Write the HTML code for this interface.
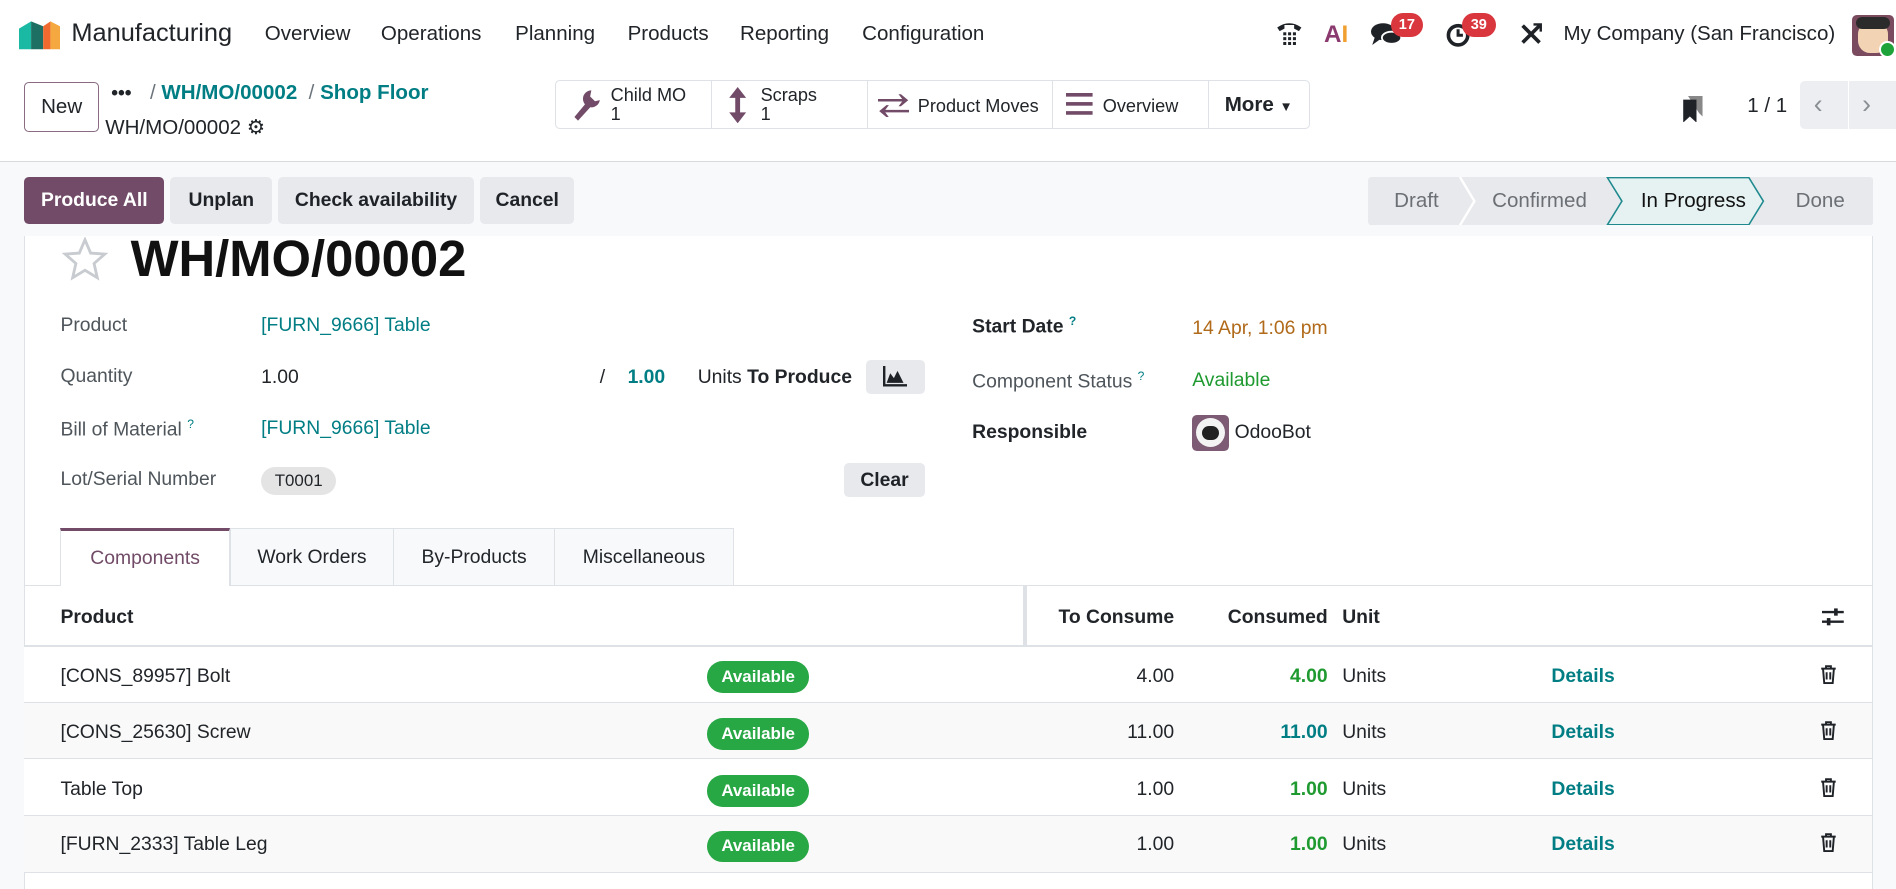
<!DOCTYPE html>
<html><head><meta charset="utf-8">
<style>
html{zoom:1.20918}
*{box-sizing:border-box;margin:0;padding:0}
body{width:1568px;height:723px;overflow:hidden;background:#f8f9fa;font-family:"Liberation Sans",sans-serif;color:#212529;position:relative;font-size:16px}
.a{position:absolute;white-space:nowrap}
.teal{color:#017e84}
.btn{position:absolute;border-radius:4px;display:flex;align-items:center;justify-content:center;font-size:16px;font-weight:bold}
.g{background:#e7e9ed;color:#1f2328}
.lbl{color:#4e555b}
.badge{position:absolute;left:585px;width:84px;height:26px;border-radius:13px;background:#28a745;color:#fff;font-weight:bold;font-size:14px;display:flex;align-items:center;justify-content:center}
.row{position:absolute;left:20px;width:1528px;border-bottom:1px solid #dee2e6}
.r{text-align:right}
</style></head><body>
<!-- header -->
<div class="a" style="left:0;top:0;width:1568px;height:134px;background:#fff;border-bottom:1px solid #d8dadd"></div>
<svg class="a" style="left:16px;top:16px" width="34" height="25" viewBox="0 0 34 25"><path d="M0 8 L10 2 V25 H0Z" fill="#1ab9a4"/><path d="M10 2 L20 6 V25 H10Z" fill="#1d6f63"/><path d="M20 6 L26 2 V25 H20Z" fill="#f06a30"/><path d="M26 2 L34 6 V25 H26Z" fill="#f5a83f"/></svg>
<div class="a" style="left:59px;top:16px;font-size:21px;color:#212529">Manufacturing</div>
<div class="a" style="left:219px;top:18px;font-size:17px">Overview</div>
<div class="a" style="left:315px;top:18px;font-size:17px">Operations</div>
<div class="a" style="left:426px;top:18px;font-size:17px">Planning</div>
<div class="a" style="left:519px;top:18px;font-size:17px">Products</div>
<div class="a" style="left:612px;top:18px;font-size:17px">Reporting</div>
<div class="a" style="left:713px;top:18px;font-size:17px">Configuration</div>
<svg class="a" style="left:1055px;top:16px" width="22" height="22" viewBox="0 0 22 22"><path d="M1 7 Q11 0 21 7 L19 10 L15 8 V5 H7 V8 L3 10Z" fill="#1f2328"/><g fill="#1f2328"><rect x="6" y="11" width="2.5" height="2.5"/><rect x="10" y="11" width="2.5" height="2.5"/><rect x="14" y="11" width="2.5" height="2.5"/><rect x="6" y="15" width="2.5" height="2.5"/><rect x="10" y="15" width="2.5" height="2.5"/><rect x="14" y="15" width="2.5" height="2.5"/><rect x="6" y="19" width="2.5" height="2.5"/><rect x="10" y="19" width="2.5" height="2.5"/><rect x="14" y="19" width="2.5" height="2.5"/></g></svg>
<div class="a" style="left:1095px;top:17px;font-size:20px;font-weight:bold;color:#8a3a6e">A<span style="color:#f0a030">I</span></div>
<svg class="a" style="left:1134px;top:18px" width="26" height="22" viewBox="0 0 26 22"><ellipse cx="10" cy="8" rx="10" ry="7" fill="#1f2328"/><path d="M3 13 L1 19 L8 14Z" fill="#1f2328"/><ellipse cx="17" cy="13" rx="8" ry="5" fill="#1f2328" stroke="#fff" stroke-width="1.5"/></svg>
<div class="a" style="left:1150px;top:11px;width:27px;height:20px;border-radius:10px;background:#d9363e;color:#fff;font-size:12px;font-weight:bold;text-align:center;line-height:20px">17</div>
<svg class="a" style="left:1196px;top:18px" width="22" height="22" viewBox="0 0 22 22"><circle cx="10" cy="11" r="8" fill="none" stroke="#1f2328" stroke-width="3"/><path d="M10 6 V11 H14" stroke="#1f2328" stroke-width="2.5" fill="none"/></svg>
<div class="a" style="left:1209px;top:11px;width:28px;height:20px;border-radius:10px;background:#d9363e;color:#fff;font-size:12px;font-weight:bold;text-align:center;line-height:20px">39</div>
<svg class="a" style="left:1256px;top:18px" width="20" height="20" viewBox="0 0 20 20"><path d="M3 3 L17 17 M17 3 L3 17" stroke="#1f2328" stroke-width="3"/><path d="M12 2 L18 2 L18 8" stroke="#1f2328" stroke-width="2" fill="none"/></svg>
<div class="a" style="left:1293px;top:18px;font-size:17px">My Company (San Francisco)</div>
<div class="a" style="left:1532px;top:12px;width:34px;height:34px;border-radius:4px;background:#7a4b5e"><div style="position:absolute;left:5px;top:6px;width:24px;height:26px;border-radius:10px;background:#f2d3b4"></div><div style="position:absolute;left:3px;top:2px;width:28px;height:10px;border-radius:6px;background:#2b2b2b"></div><div style="position:absolute;left:22px;top:22px;width:14px;height:14px;border-radius:7px;background:#1ea33a;border:2px solid #fff"></div></div>
<!-- control panel -->
<div class="a" style="left:20px;top:68px;width:62px;height:41px;border:1px solid #8a6b82;border-radius:4px;font-size:17px;text-align:center;line-height:39px;color:#212529">New</div>
<div class="a" style="left:92px;top:68px;font-size:16px;font-weight:bold">•••</div>
<div class="a" style="left:124px;top:67px;font-size:17px;color:#6c757d">/ <span class="teal" style="font-weight:bold">WH/MO/00002</span> &nbsp;/ <span class="teal" style="font-weight:bold">Shop Floor</span></div>
<div class="a" style="left:87px;top:95px;font-size:17px">WH/MO/00002 <span style="font-size:17px">⚙</span></div>
<div class="a" style="left:459px;top:66px;width:541px;height:41px;border:1px solid #dee2e6;border-radius:4px 0 0 4px;background:#fff"></div>
<div class="a" style="left:588px;top:66px;width:1px;height:41px;background:#dee2e6"></div>
<div class="a" style="left:717px;top:66px;width:1px;height:41px;background:#dee2e6"></div>
<div class="a" style="left:870px;top:66px;width:1px;height:41px;background:#dee2e6"></div>
<svg class="a" style="left:473px;top:73px" width="26" height="28" viewBox="0 0 26 28"><path d="M16 2 A7 7 0 1 0 23 10 L19 11 L15 7Z M12 12 L2 24 L5 27 L15 16" fill="#714b67"/></svg>
<div class="a" style="left:505px;top:71px;font-size:15px;line-height:16px">Child MO<br>1</div>
<svg class="a" style="left:602px;top:72px" width="16" height="30" viewBox="0 0 16 30"><path d="M8 0 L15 9 H10 V21 H15 L8 30 L1 21 H6 V9 H1Z" fill="#714b67"/></svg>
<div class="a" style="left:629px;top:71px;font-size:15px;line-height:16px">Scraps<br>1</div>
<svg class="a" style="left:726px;top:77px" width="26" height="20" viewBox="0 0 26 20"><path d="M0 5 H20 L17 1 H19 L25 6 L19 11 H17 L20 7 H0Z M26 14 H6 L9 10 H7 L1 15 L7 20 H9 L6 16 H26Z" fill="#714b67"/></svg>
<div class="a" style="left:759px;top:79px;font-size:15px">Product Moves</div>
<svg class="a" style="left:882px;top:77px" width="22" height="18" viewBox="0 0 22 18"><rect y="0" width="22" height="3" fill="#714b67"/><rect y="7.5" width="22" height="3" fill="#714b67"/><rect y="15" width="22" height="3" fill="#714b67"/></svg>
<div class="a" style="left:912px;top:79px;font-size:15px">Overview</div>
<div class="a" style="left:999px;top:66px;width:84px;height:41px;border:1px solid #dee2e6;border-radius:0 4px 4px 0;background:#fff;font-size:17px;font-weight:bold;padding-left:13px;line-height:39px">More <span style="font-size:11px">▼</span></div>
<svg class="a" style="left:1391px;top:79px" width="18" height="22" viewBox="0 0 18 22"><path d="M5 0 H17 V17 L14 14 Z" fill="#888"/><path d="M1 3 H12 V22 L6.5 17 L1 22Z" fill="#1f2328"/></svg>
<div class="a" style="left:1445px;top:78px;font-size:17px">1 / 1</div>
<div class="a" style="left:1489px;top:67px;width:79px;height:40px;background:#eceef1;border-radius:4px 0 0 4px"></div>
<div class="a" style="left:1528px;top:67px;width:1px;height:40px;background:#fff"></div>
<div class="a" style="left:1500px;top:74px;font-size:22px;color:#8a8f94">&#x2039;</div>
<div class="a" style="left:1540px;top:74px;font-size:22px;color:#8a8f94">&#x203A;</div>
<!-- action bar -->
<div class="btn" style="left:20px;top:146px;width:116px;height:39px;background:#714b67;color:#fff">Produce All</div>
<div class="btn g" style="left:141px;top:146px;width:84px;height:39px">Unplan</div>
<div class="btn g" style="left:230px;top:146px;width:162px;height:39px">Check availability</div>
<div class="btn g" style="left:397px;top:146px;width:78px;height:39px">Cancel</div>
<svg class="a" style="left:1131px;top:146px" width="418" height="40" viewBox="0 0 418 40"><rect width="418" height="40" rx="3" fill="#e7e9ed"/><path d="M76 0 L88 20 L76 40" stroke="#fff" stroke-width="2" fill="none"/><path d="M198 0.5 L315 0.5 L327 20 L315 39.5 L198 39.5 L210 20Z" fill="#e6f2f2" stroke="#1f8a8e" stroke-width="1.3"/></svg>
<div class="a" style="left:1153px;top:156px;font-size:17px;color:#6c7075">Draft</div>
<div class="a" style="left:1234px;top:156px;font-size:17px;color:#6c7075">Confirmed</div>
<div class="a" style="left:1357px;top:156px;font-size:17px;color:#111">In Progress</div>
<div class="a" style="left:1485px;top:156px;font-size:17px;color:#6c7075">Done</div>
<!-- sheet -->
<div class="a" style="left:20px;top:195px;width:1529px;height:540px;background:#fff;border-left:1px solid #dee2e6;border-right:1px solid #dee2e6"></div>
<svg class="a" style="left:51px;top:196px" width="38" height="36" viewBox="0 0 24 23"><path d="M12 1.5 L15 8.5 L22.5 9 L16.8 14 L18.5 21.5 L12 17.6 L5.5 21.5 L7.2 14 L1.5 9 L9 8.5Z" fill="none" stroke="#c8cbcf" stroke-width="1.5"/></svg>
<div class="a" style="left:108px;top:189px;font-size:42px;font-weight:bold;color:#111">WH/MO/00002</div>
<div class="a lbl" style="left:50px;top:260px">Product</div>
<div class="a teal" style="left:216px;top:260px">[FURN_9666] Table</div>
<div class="a lbl" style="left:50px;top:302px">Quantity</div>
<div class="a" style="left:216px;top:303px">1.00</div>
<div class="a" style="left:496px;top:303px">/</div>
<div class="a teal" style="left:519px;top:303px;font-weight:bold">1.00</div>
<div class="a" style="left:577px;top:303px">Units <b>To Produce</b></div>
<div class="a" style="left:716px;top:298px;width:49px;height:28px;background:#e7e9ed;border-radius:4px"></div>
<svg class="a" style="left:730px;top:303px" width="20" height="17" viewBox="0 0 20 17"><path d="M1 0 V16 H20" stroke="#1f2328" stroke-width="2" fill="none"/><path d="M3 14 L6 6 L9 10 L12 4 L17 14Z" fill="#1f2328"/></svg>
<div class="a lbl" style="left:50px;top:345px">Bill of Material <sup style="font-size:10px;color:#017e84">?</sup></div>
<div class="a teal" style="left:216px;top:345px">[FURN_9666] Table</div>
<div class="a lbl" style="left:50px;top:387px">Lot/Serial Number</div>
<div class="a" style="left:216px;top:386px;width:62px;height:23px;border-radius:12px;background:#e4e4e4;font-size:14px;text-align:center;line-height:23px">T0001</div>
<div class="btn g" style="left:698px;top:383px;width:67px;height:28px">Clear</div>
<div class="a" style="left:804px;top:260px;font-weight:bold">Start Date <sup style="font-size:10px;color:#017e84">?</sup></div>
<div class="a" style="left:986px;top:262px;color:#b06a1a">14 Apr, 1:06 pm</div>
<div class="a lbl" style="left:804px;top:305px">Component Status <sup style="font-size:10px;color:#017e84">?</sup></div>
<div class="a" style="left:986px;top:305px;color:#1f9a30">Available</div>
<div class="a" style="left:804px;top:348px;font-weight:bold">Responsible</div>
<div class="a" style="left:986px;top:343px;width:30px;height:30px;border-radius:4px;background:#7d5b74"><div style="position:absolute;left:3px;top:3px;width:24px;height:24px;border-radius:12px;background:#f3f3f3"></div><div style="position:absolute;left:8px;top:9px;width:14px;height:12px;border-radius:6px;background:#222"></div></div>
<div class="a" style="left:1021px;top:348px">OdooBot</div>
<!-- tabs -->
<div class="a" style="left:20px;top:484px;width:1529px;height:1px;background:#dee2e6"></div>
<div class="a" style="left:50px;top:437px;width:140px;height:48px;background:#fff;border-top:3px solid #714b67;border-left:1px solid #dee2e6;border-right:1px solid #dee2e6;color:#714b67;text-align:center;line-height:45px">Components</div>
<div class="a" style="left:190px;top:437px;width:136px;height:47px;background:#f8f9fa;border:1px solid #dee2e6;border-bottom:none;text-align:center;line-height:47px">Work Orders</div>
<div class="a" style="left:326px;top:437px;width:133px;height:47px;background:#f8f9fa;border:1px solid #dee2e6;border-bottom:none;border-left:none;text-align:center;line-height:47px">By-Products</div>
<div class="a" style="left:459px;top:437px;width:148px;height:47px;background:#f8f9fa;border:1px solid #dee2e6;border-bottom:none;border-left:none;text-align:center;line-height:47px">Miscellaneous</div>
<!-- table -->
<div class="row" style="top:485px;height:50px;border-bottom:2px solid #dee2e6"></div>
<div class="a" style="left:846px;top:485px;width:3px;height:50px;background:#dee2e6"></div>
<div class="a" style="left:50px;top:501px;font-weight:bold">Product</div>
<div class="a r" style="left:850px;width:121px;top:501px;font-weight:bold">To Consume</div>
<div class="a r" style="left:990px;width:108px;top:501px;font-weight:bold">Consumed</div>
<div class="a" style="left:1110px;top:501px;font-weight:bold">Unit</div>
<svg class="a" style="left:1507px;top:501px" width="18" height="18" viewBox="0 0 18 18"><path d="M0 5 H18 M0 13 H18" stroke="#1f2328" stroke-width="2"/><rect x="10" y="2" width="3" height="6" fill="#1f2328"/><rect x="4" y="10" width="3" height="6" fill="#1f2328"/></svg>

<div class="row" style="top:535px;height:46px;background:#fff"></div>
<div class="row" style="top:581px;height:47px;background:#f9f9f9"></div>
<div class="row" style="top:628px;height:47px;background:#fff"></div>
<div class="row" style="top:675px;height:47px;background:#f9f9f9"></div>

<div class="a" style="left:50px;top:550px">[CONS_89957] Bolt</div>
<div class="badge" style="top:547px">Available</div>
<div class="a r" style="left:850px;width:121px;top:550px">4.00</div>
<div class="a r" style="left:990px;width:108px;top:550px;color:#1f9a30;font-weight:bold">4.00</div>
<div class="a" style="left:1110px;top:550px">Units</div>
<div class="a teal" style="left:1283px;top:550px;font-weight:bold">Details</div>

<div class="a" style="left:50px;top:596px">[CONS_25630] Screw</div>
<div class="badge" style="top:594px">Available</div>
<div class="a r" style="left:850px;width:121px;top:596px">11.00</div>
<div class="a r" style="left:990px;width:108px;top:596px;color:#017e84;font-weight:bold">11.00</div>
<div class="a" style="left:1110px;top:596px">Units</div>
<div class="a teal" style="left:1283px;top:596px;font-weight:bold">Details</div>

<div class="a" style="left:50px;top:643px">Table Top</div>
<div class="badge" style="top:641px">Available</div>
<div class="a r" style="left:850px;width:121px;top:643px">1.00</div>
<div class="a r" style="left:990px;width:108px;top:643px;color:#1f9a30;font-weight:bold">1.00</div>
<div class="a" style="left:1110px;top:643px">Units</div>
<div class="a teal" style="left:1283px;top:643px;font-weight:bold">Details</div>

<div class="a" style="left:50px;top:689px">[FURN_2333] Table Leg</div>
<div class="badge" style="top:687px">Available</div>
<div class="a r" style="left:850px;width:121px;top:689px">1.00</div>
<div class="a r" style="left:990px;width:108px;top:689px;color:#1f9a30;font-weight:bold">1.00</div>
<div class="a" style="left:1110px;top:689px">Units</div>
<div class="a teal" style="left:1283px;top:689px;font-weight:bold">Details</div>

<svg class="a" style="left:1505px;top:550px" width="14" height="16" viewBox="0 0 14 16"><path d="M1 3 H13 M5 3 V1 H9 V3 M2.5 3 L3.5 15 H10.5 L11.5 3 M5.5 6 V12 M8.5 6 V12" stroke="#1f2328" stroke-width="1.6" fill="none"/></svg>
<svg class="a" style="left:1505px;top:596px" width="14" height="16" viewBox="0 0 14 16"><path d="M1 3 H13 M5 3 V1 H9 V3 M2.5 3 L3.5 15 H10.5 L11.5 3 M5.5 6 V12 M8.5 6 V12" stroke="#1f2328" stroke-width="1.6" fill="none"/></svg>
<svg class="a" style="left:1505px;top:643px" width="14" height="16" viewBox="0 0 14 16"><path d="M1 3 H13 M5 3 V1 H9 V3 M2.5 3 L3.5 15 H10.5 L11.5 3 M5.5 6 V12 M8.5 6 V12" stroke="#1f2328" stroke-width="1.6" fill="none"/></svg>
<svg class="a" style="left:1505px;top:689px" width="14" height="16" viewBox="0 0 14 16"><path d="M1 3 H13 M5 3 V1 H9 V3 M2.5 3 L3.5 15 H10.5 L11.5 3 M5.5 6 V12 M8.5 6 V12" stroke="#1f2328" stroke-width="1.6" fill="none"/></svg>
</body></html>
